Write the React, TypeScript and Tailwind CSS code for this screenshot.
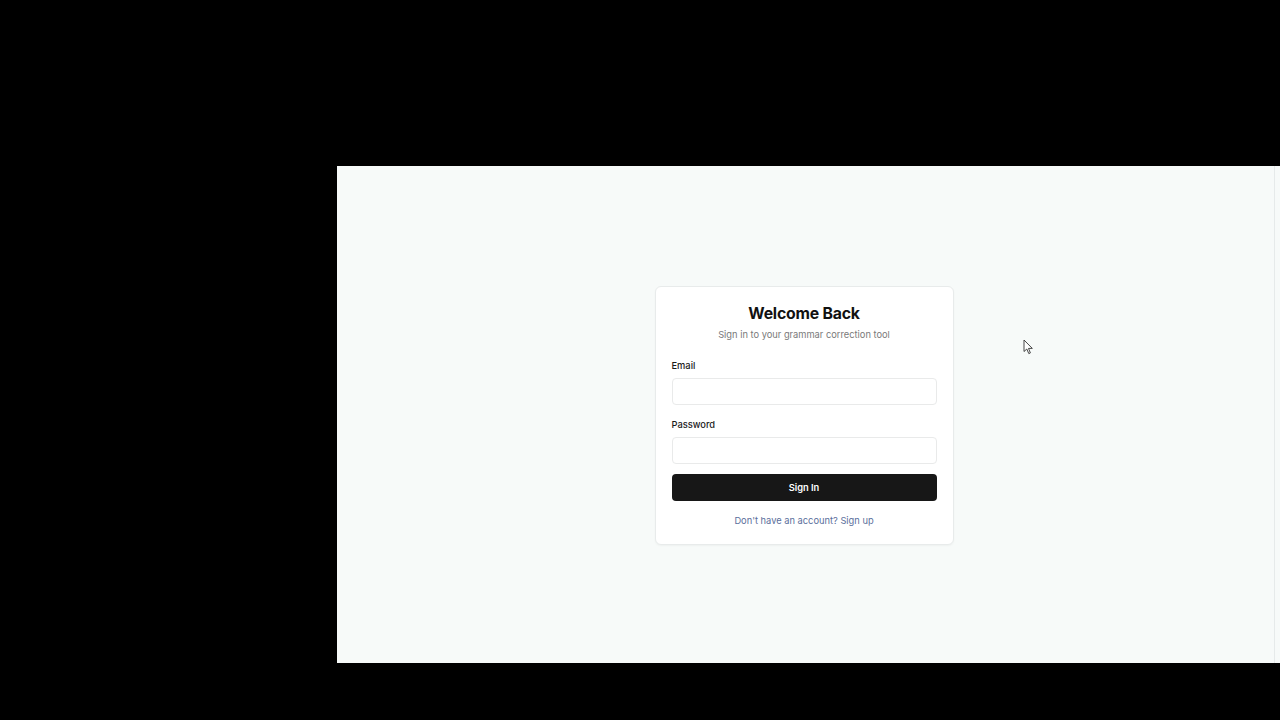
import React from "react";

export default function App() {
  return (
    <div className="relative h-[720px] w-[1280px] overflow-hidden bg-black" style={{ fontFamily: "Inter, 'Noto Sans', sans-serif" }}>
      <div className="pl-[337px] pt-[166px]">
        <div className="flex h-[497px] w-[943px] bg-[#f7faf9]">
          <div className="flex flex-1 items-center justify-center pt-[2px]">
            <div className="w-[299px] rounded-[6px] border border-[#e8ebeb] bg-white px-[16px] pb-[16px] pt-[16px] shadow-[0_1px_2px_rgba(0,0,0,0.04)]">
              <h1 className="text-center text-[15.8px] font-bold leading-[22px] tracking-[-0.2px] text-[#111]">Welcome Back</h1>
              <p className="mt-[3px] text-center text-[9.3px] leading-[14px] text-[#7a7a7a]">Sign in to your grammar correction tool</p>
              <div className="mt-[17px]">
                <label className="block text-[9.3px] font-medium leading-[14px] text-[#1a1a1a]">Email</label>
                <div className="mt-[5px] h-[27px] w-full rounded-[4px] border border-[#e9eaea] bg-white" />
              </div>
              <div className="mt-[13px]">
                <label className="block text-[9.3px] font-medium leading-[14px] text-[#1a1a1a]">Password</label>
                <div className="mt-[5px] h-[27px] w-full rounded-[4px] border border-[#e9eaea] bg-white" />
              </div>
              <button className="mt-[10px] flex h-[27px] w-full items-center justify-center rounded-[4px] bg-[#171717] text-[9.3px] font-semibold text-white">Sign In</button>
              <p className="mt-[13px] text-center text-[9.3px] leading-[14px] text-[#5b6f9c]">Don't have an account? Sign up</p>
            </div>
          </div>
          <div className="flex w-[9px] pl-[3px]">
            <div className="w-[1px] bg-[#e6eaea]" />
          </div>
        </div>
      </div>
      <svg className="absolute left-[1023px] top-[339px]" width="11" height="16" viewBox="0 0 11 16">
        <path d="M1 1 L1 12.5 L3.8 10 L5.8 14.6 L7.4 13.9 L5.5 9.4 L9.3 9.4 Z" fill="#fff" stroke="#333" strokeWidth="0.9" strokeLinejoin="round" />
      </svg>
    </div>
  );
}
